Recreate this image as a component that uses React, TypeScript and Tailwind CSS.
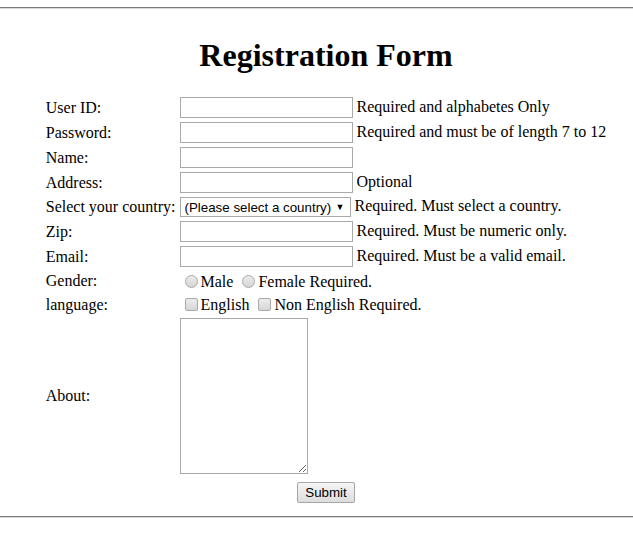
const serif = "font-['Liberation_Serif','Times_New_Roman',serif]";
const sans = "font-['Liberation_Sans',Arial,sans-serif]";

const TextInput = () => (
  <input
    type="text"
    className={`${sans} box-border h-[21px] w-[173px] border border-[#a9a9a9] bg-white px-[2px] py-px text-[13.333px] leading-[normal] outline-none`}
  />
);

const Radio = () => (
  <input
    type="radio"
    name="gender"
    className="appearance-none align-[-1px] ml-[5px] mr-[3px] inline-block h-[13px] w-[13px] rounded-full border border-[#a8a8a8] bg-gradient-to-b from-[#ececec] to-[#d6d6d6]"
  />
);

const Check = () => (
  <input
    type="checkbox"
    className="appearance-none align-[-1px] ml-[5px] mr-[3px] inline-block h-[13px] w-[13px] rounded-[2px] border border-[#a8a8a8] bg-gradient-to-b from-[#ececec] to-[#d6d6d6]"
  />
);

const rows = [
  { label: "User ID:", note: "Required and alphabetes Only" },
  { label: "Password:", note: "Required and must be of length 7 to 12" },
  { label: "Name:", note: "" },
  { label: "Address:", note: "Optional" },
];

const Hr = () => (
  <div className="h-0 border-t border-b border-t-[#7b7b7b] border-b-[#d9d9d9]" />
);

const App = () => {
  return (
    <div className={`${serif} min-h-[533px] overflow-hidden bg-white pt-[7px] text-[16px] leading-[normal] text-black`}>
      <Hr />
      <div className="pl-[19px]">
        <h1 className="mt-[28px] mb-[21px] text-center text-[32px] font-bold leading-[36px]">
          Registration Form
        </h1>
        <table className="mx-auto border-separate border-spacing-[2px]">
          <tbody>
            {rows.map((r) => (
              <tr key={r.label}>
                <td className="p-px align-middle">{r.label}</td>
                <td className="p-px align-middle whitespace-nowrap">
                  <TextInput /> {r.note}
                </td>
              </tr>
            ))}
            <tr>
              <td className="p-px align-middle whitespace-nowrap">Select your country:</td>
              <td className="p-px align-middle whitespace-nowrap">
                <span className="relative inline-block align-middle">
                  <select
                    className={`${sans} block h-[20px] w-[171px] appearance-none border border-[#a9a9a9] bg-white pl-[4px] text-[13.333px] text-black outline-none`}
                    defaultValue=""
                  >
                    <option value="">(Please select a country)</option>
                  </select>
                  <span className="pointer-events-none absolute right-[6px] top-[3px] text-[9px] leading-[14px]">▼</span>
                </span>{" "}
                Required. Must select a country.
              </td>
            </tr>
            <tr>
              <td className="p-px align-middle">Zip:</td>
              <td className="p-px align-middle whitespace-nowrap">
                <TextInput /> Required. Must be numeric only.
              </td>
            </tr>
            <tr>
              <td className="p-px align-middle">Email:</td>
              <td className="p-px align-middle whitespace-nowrap">
                <TextInput /> Required. Must be a valid email.
              </td>
            </tr>
            <tr>
              <td className="p-px align-middle">Gender:</td>
              <td className="p-px pt-[3px] align-middle whitespace-nowrap">
                <Radio />Male <Radio />Female Required.
              </td>
            </tr>
            <tr>
              <td className="p-px align-middle">language:</td>
              <td className="p-px pt-[2px] align-middle whitespace-nowrap">
                <Check />English <Check />Non English Required.
              </td>
            </tr>
            <tr>
              <td className="p-px align-middle">About:</td>
              <td className="p-px align-middle">
                <textarea className="block h-[156px] w-[128px] border border-[#a9a9a9] bg-white outline-none" />
              </td>
            </tr>
            <tr>
              <td colSpan={2} className="p-px pt-[5px] text-center">
                <button
                  type="submit"
                  className={`${sans} h-[21px] rounded-[2px] border border-[#a6a6a6] bg-gradient-to-b from-[#f5f5f5] to-[#dddddd] px-[7px] text-[13.333px] leading-[17px] text-black`}
                >
                  Submit
                </button>
              </td>
            </tr>
          </tbody>
        </table>
      </div>
      <div className="mt-[10px]">
        <Hr />
      </div>
    </div>
  );
};

export default App;
